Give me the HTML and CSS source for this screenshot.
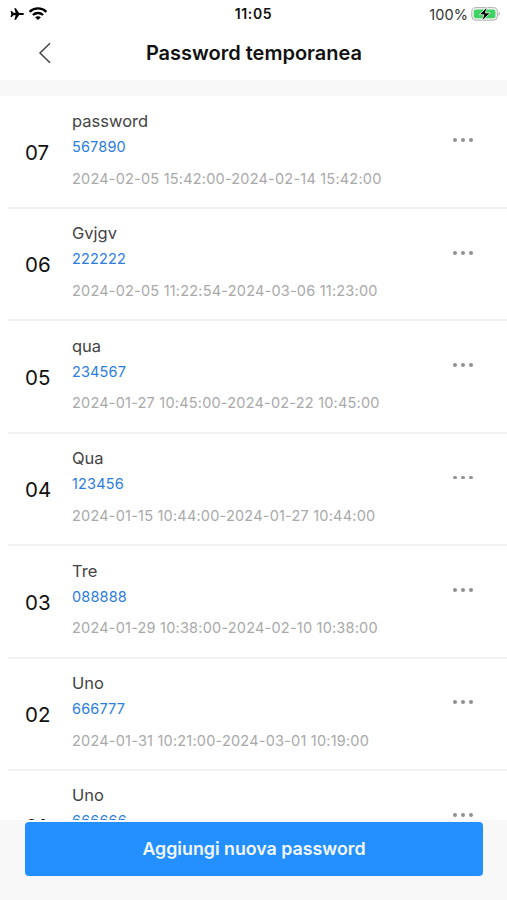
FILE: index.html
```html
<!DOCTYPE html>
<html lang="it">
<head>
<meta charset="utf-8">
<title>Password temporanea</title>
<link rel="stylesheet" href="styles.css">
</head>
<body>
<div class="screen">
  <div class="status">
    <div class="status-left">
      <svg width="16" height="14" viewBox="0 0 16 14"><path d="M15 7c0 .6-.8 1.100-1.900 1.100h-3L6.900 12.700H5.300L6.700 8.200H4.200L2.900 9.900H1.600L2.300 7 1.600 4.100h1.300L4.200 5.800h2.500L5.300 1.300h1.600L10.100 5.900h3c1.100 0 1.900.5 1.900 1.100z"/></svg>
      <svg width="20" height="14" viewBox="0 0 20 14"><g fill="none" stroke="#000" stroke-width="2.300"><path d="M1.600 4.800C6.300 .3 13.700 .3 18.400 4.800"/><path d="M4.900 8C7.800 5.300 12.200 5.300 15.100 8"/></g><path d="M10 13L7.100 10.300C8.700 8.800 11.300 8.800 12.900 10.300Z"/></svg>
    </div>
    <div class="clock">11:05</div>
    <div class="status-right">
      <span>100%</span>
      <svg width="30" height="16" viewBox="0 0 30 16"><rect x=".8" y="1.600" width="25.600" height="12.600" rx="4" fill="#f1f1f1" stroke="#b0b0b0"/><rect x="2.800" y="3.500" width="21.600" height="8.800" rx="2" fill="#3fd365"/><path d="M27.600 5.800c1.700.7 1.700 3.500 0 4.200z" fill="#aaa"/><path d="M16.200 .8L8.400 8.700h4.500l-2 6.300 8.300-8.100h-4.900z" stroke="#e9f7ec" stroke-width=".8"/></svg>
    </div>
  </div>
  <header class="nav">
    <svg class="back" width="14" height="22" viewBox="0 0 14 22"><path d="M12 1.200L2 11l10 9.800" fill="none" stroke="#444" stroke-width="1.500"/></svg>
    <h1>Password temporanea</h1>
  </header>
  <main class="list">
    <article class="row"><div class="num">07</div><div class="info"><div class="name">password</div><div class="code">567890</div><div class="dates">2024-02-05 15:42:00-2024-02-14 15:42:00</div></div><div class="more"><i></i><i></i><i></i></div></article>
    <article class="row"><div class="num">06</div><div class="info"><div class="name">Gvjgv</div><div class="code">222222</div><div class="dates">2024-02-05 11:22:54-2024-03-06 11:23:00</div></div><div class="more"><i></i><i></i><i></i></div></article>
    <article class="row"><div class="num">05</div><div class="info"><div class="name">qua</div><div class="code">234567</div><div class="dates">2024-01-27 10:45:00-2024-02-22 10:45:00</div></div><div class="more"><i></i><i></i><i></i></div></article>
    <article class="row"><div class="num">04</div><div class="info"><div class="name">Qua</div><div class="code">123456</div><div class="dates">2024-01-15 10:44:00-2024-01-27 10:44:00</div></div><div class="more"><i></i><i></i><i></i></div></article>
    <article class="row"><div class="num">03</div><div class="info"><div class="name">Tre</div><div class="code">088888</div><div class="dates">2024-01-29 10:38:00-2024-02-10 10:38:00</div></div><div class="more"><i></i><i></i><i></i></div></article>
    <article class="row"><div class="num">02</div><div class="info"><div class="name">Uno</div><div class="code">666777</div><div class="dates">2024-01-31 10:21:00-2024-03-01 10:19:00</div></div><div class="more"><i></i><i></i><i></i></div></article>
    <article class="row"><div class="num">01</div><div class="info"><div class="name">Uno</div><div class="code">666666</div></div><div class="more"><i></i><i></i><i></i></div></article>
  </main>
  <footer class="footer"><button class="add">Aggiungi nuova password</button></footer>
</div>
</body>
</html>
```

FILE: styles.css
```css
* { box-sizing: border-box; }
body { margin: 0; font-family: Inter, "Liberation Sans", sans-serif; background: #fff; }
.screen { width: 507px; height: 900px; display: flex; flex-direction: column; overflow: hidden; }
.status { height: 28px; flex: none; display: grid; grid-template-columns: 1fr auto 1fr; align-items: center; padding: 0 7px 0 9px; }
.status-left { display: flex; gap: 3px; align-items: center; height: 28px; }
.clock { margin-right: 2px; font-size: 14px; line-height: 28px; font-weight: 600; letter-spacing: .65px; color: #111; }
.status-right { display: flex; justify-content: flex-end; align-items: center; gap: 3px; height: 26px; margin-right: -1px; font-size: 14.500px; color: #333; letter-spacing: .1px; }
.status-right svg { flex: none; }
.nav { height: 52px; flex: none; display: grid; grid-template-columns: 60px 1fr 60px; align-items: center; padding-bottom: 6px; }
.back { margin: 3px 0 0 38px; }
h1 { margin: 3px 0 0 1px; text-align: center; font-size: 20px; line-height: 28px; font-weight: 600; color: #111; white-space: nowrap; }
.list { flex: none; height: 740px; padding-top: .6px; border-top: 16px solid #f8f8f8; overflow: hidden; }
.row { height: 112.400px; margin-left: 8px; display: flex; border-bottom: 2px solid #f2f2f2; }
.num { width: 64px; flex: none; padding: 42.500px 0 0 17px; font-size: 20.500px; line-height: 28px; color: #111; }
.info { flex: 1; padding-top: 12.400px; white-space: nowrap; }
.name { font-size: 16.500px; line-height: 24px; color: #444; }
.code { margin-top: 3px; font-size: 14.500px; line-height: 22px; letter-spacing: .15px; color: #2b7de0; }
.dates { margin-top: 9.600px; font-size: 14.500px; line-height: 22px; letter-spacing: .21px; color: #a9a9a9; }
.more { flex: none; width: 54px; display: flex; gap: 4.200px; padding: 41.900px 0 0 .4px; }
.more i { width: 3.800px; height: 3.800px; border-radius: 50%; background: #929292; }
.footer { flex: 1; background: #f8f8f8; padding: 2px 24px 0 25px; }
.add { display: block; width: 100%; height: 53.500px; border: 0; border-radius: 4px; background: #2490ff; color: #f2f8ff; font: 600 17.800px/54px Inter, sans-serif; padding: 0; }
```
